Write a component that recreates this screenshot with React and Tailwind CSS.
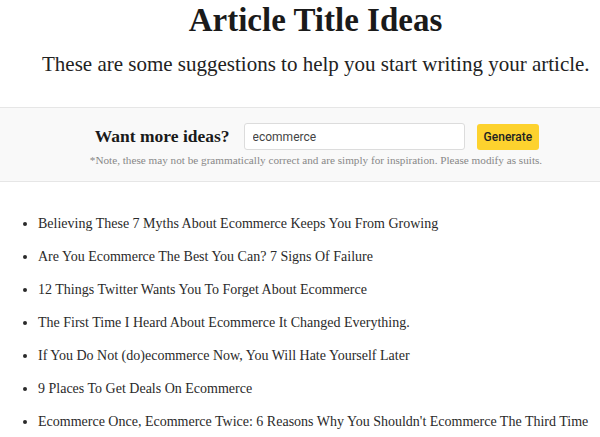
const ideas = [
  "Believing These 7 Myths About Ecommerce Keeps You From Growing",
  "Are You Ecommerce The Best You Can? 7 Signs Of Failure",
  "12 Things Twitter Wants You To Forget About Ecommerce",
  "The First Time I Heard About Ecommerce It Changed Everything.",
  "If You Do Not (do)ecommerce Now, You Will Hate Yourself Later",
  "9 Places To Get Deals On Ecommerce",
  "Ecommerce Once, Ecommerce Twice: 6 Reasons Why You Shouldn't Ecommerce The Third Time",
]

export default function App() {
  return (
    <div className="min-h-[437px] overflow-hidden bg-white font-['Liberation_Serif',serif] text-[#222]">
      <header className="flex flex-col">
        <h1 className="mt-[2px] pl-[31px] text-center text-[33px] font-bold leading-[36px] text-[#1a1a1a]">
          Article Title Ideas
        </h1>
        <p className="mt-[13px] pl-[42px] text-[21px] leading-[26px] text-[#222]">
          These are some suggestions to help you start writing your article.
        </p>
      </header>

      <section className="mt-[30px] border-y border-[#e6e6e6] bg-[#f9f9f9] pb-[14px] pt-[15px]">
        <div className="flex items-center justify-center gap-[14px] pl-[34px]">
          <span className="text-[17.5px] font-bold text-[#1a1a1a]">Want more ideas?</span>
          <input
            readOnly
            value="ecommerce"
            className="h-[27px] w-[221px] rounded-[3px] border border-[#dcdcdc] bg-white px-[8px] font-['Roboto',sans-serif] text-[12px] text-[#444] outline-none"
          />
          <button
            type="button"
            className="ml-[-2px] h-[26px] rounded-[3px] bg-[#fdd22e] px-[7px] font-['Roboto',sans-serif] text-[12px] font-medium text-[#222]"
          >
            Generate
          </button>
        </div>
        <p className="mt-[3px] pl-[32px] text-center text-[11.2px] leading-[14px] text-[#888]">
          *Note, these may not be grammatically correct and are simply for inspiration. Please modify as suits.
        </p>
      </section>

      <ul className="mt-[33px] list-disc pl-[38px] text-[14px] leading-[18px] text-[#2a2a2a]">
        {ideas.map((idea) => (
          <li key={idea} className="mb-[15px] whitespace-nowrap pl-0">
            {idea}
          </li>
        ))}
      </ul>
    </div>
  )
}
